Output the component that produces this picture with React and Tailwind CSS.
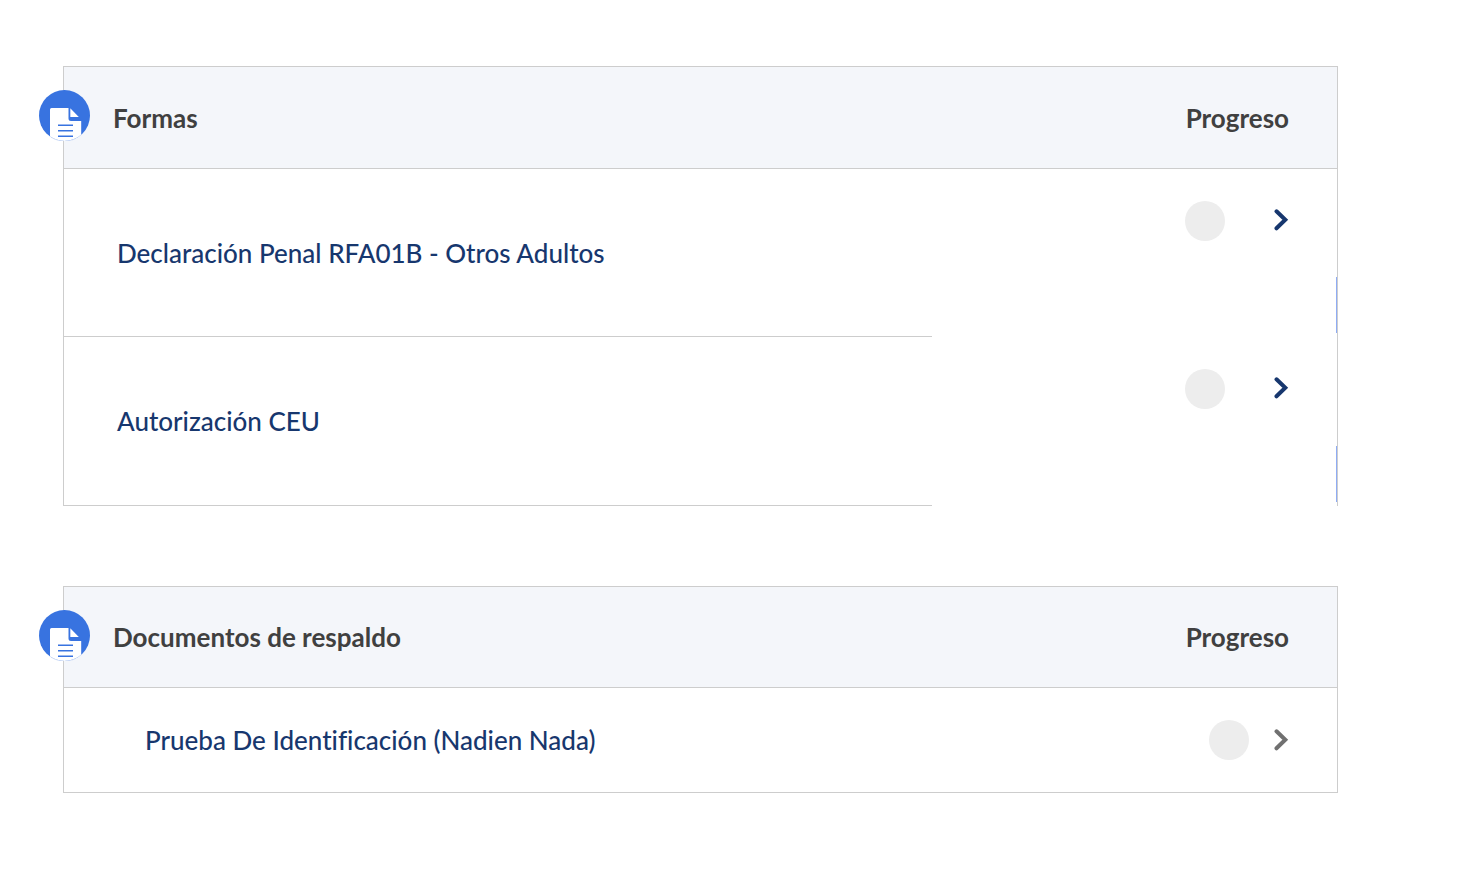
import React from "react";

const sections = [
  {
    title: "Formas",
    rows: [
      { label: "Declaración Penal RFA01B - Otros Adultos" },
      { label: "Autorización CEU" },
    ],
  },
  {
    title: "Documentos de respaldo",
    compact: true,
    rows: [{ label: "Prueba De Identificación (Nadien Nada)" }],
  },
];

const DocumentIcon = () => (
  <svg
    viewBox="0 0 51 51"
    className="absolute top-6 -left-6 h-[51px] w-[51px]"
    aria-hidden="true"
  >
    <clipPath id="badge">
      <circle cx="25.5" cy="25.5" r="25.5" />
    </clipPath>
    <circle cx="25.5" cy="25.5" r="25.5" fill="#3873e0" />
    <g clipPath="url(#badge)">
      <path d="M12.500 18h17v10.500q0 2.500 2.500 2.500h10.200v21H11V19.500q0-1.500 1.500-1.500z" fill="#fff" />
      <path d="M31.300 18.200v8.800h8.500z" fill="#fff" />
      <path d="M19 35.200h15M19 40.700h15M19 46.200h15" stroke="#3873e0" strokeWidth="1.400" />
    </g>
    <path d="M12 47.200a25.500 25.500 0 0 0 27 0" fill="none" stroke="#c5d6f6" strokeWidth="0.800" strokeDasharray="2 1" />
  </svg>
);

const Chevron = ({ className }) => (
  <button type="button" aria-label="Abrir" className={`block cursor-pointer ${className}`}>
    <svg viewBox="0 0 16 22" className="h-[22px] w-4" fill="none" stroke="currentColor">
      <path d="M3.500 2.300L12.300 10.800L3.500 19.300" strokeWidth="4" strokeLinecap="round" />
    </svg>
  </button>
);

const SectionTable = ({ title, compact, rows }) => (
  <section className="relative">
    <table className="w-full table-fixed border-separate border-spacing-0 border-t border-r border-l border-[#cdcdcd]">
      <thead>
        <tr className="bg-[#f4f6fa] text-[#404040]">
          <th
            scope="col"
            className={`w-[68.2%] border-b border-[#cdcdcd] pl-[49px] text-left font-bold ${
              compact ? "h-[101px]" : "h-[102px]"
            }`}
          >
            {title}
          </th>
          <th scope="col" className="border-b border-[#cdcdcd] pr-12 text-right font-bold">
            Progreso
          </th>
        </tr>
      </thead>
      <tbody>
        {rows.map(({ label }) =>
          compact ? (
            <tr key={label}>
              <td className="h-[105px] border-b border-[#cdcdcd] pl-[81px]">
                <a href="#" className="text-[#17376e]">{label}</a>
              </td>
              <td className="border-b border-[#cdcdcd] pr-12">
                <div className="flex items-center justify-end gap-6">
                  <span className="h-10 w-10 rounded-full bg-[#ededed]" />
                  <Chevron className="text-[#707070]" />
                </div>
              </td>
            </tr>
          ) : (
            <tr key={label} className="h-[168px] last:h-[169px]">
              <td className="border-b border-[#cdcdcd] pl-[53px]">
                <a href="#" className="text-[#17376e]">{label}</a>
              </td>
              <td className="relative pt-8 pr-12 align-top">
                <div className="flex items-start justify-end gap-12">
                  <span className="h-10 w-10 rounded-full bg-[#ededed]" />
                  <Chevron className="mt-2 text-[#17376e]" />
                </div>
                <span className="absolute right-0 bottom-1 h-14 w-px bg-[#8facf4]" />
              </td>
            </tr>
          )
        )}
      </tbody>
    </table>
    <DocumentIcon />
  </section>
);

const App = () => {
  return (
    <main className="flex min-h-screen flex-col gap-20 bg-white pt-[66px] pr-[138px] pb-20 pl-[63px] font-['Lato',sans-serif] text-[26px] leading-8 font-medium [font-variant-ligatures:none]">
      {sections.map((section) => (
        <SectionTable key={section.title} {...section} />
      ))}
    </main>
  );
};

export default App;
